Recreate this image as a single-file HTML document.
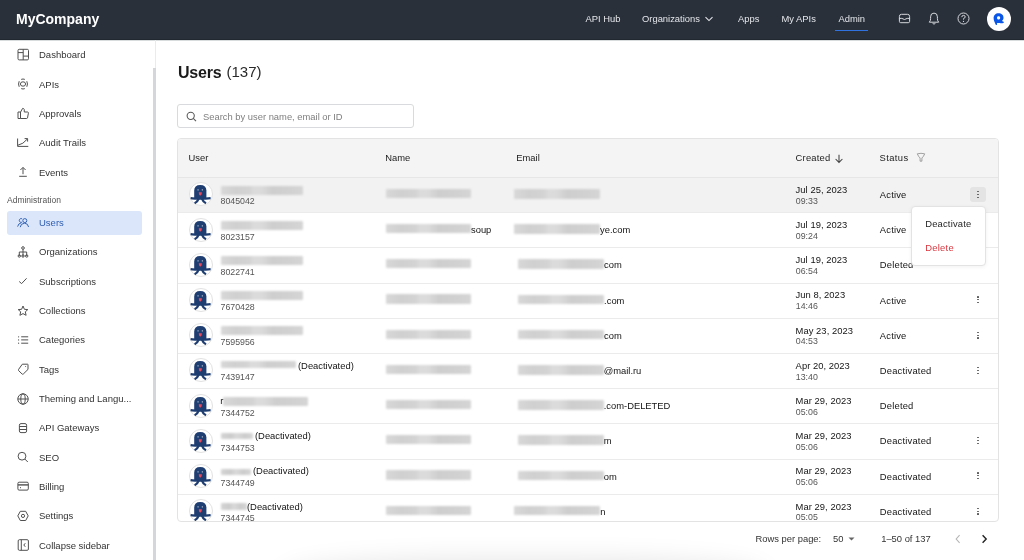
<!DOCTYPE html>
<html><head><meta charset="utf-8"><style>
html,body{margin:0;padding:0;}
body{width:1024px;height:560px;overflow:hidden;position:relative;background:#fff;font-family:"Liberation Sans",sans-serif;}
.t{position:absolute;white-space:nowrap;line-height:20px;}
.bl{position:absolute;filter:blur(1px);border-radius:1px;}
svg{overflow:visible}
</style></head><body>
<div style="position:absolute;left:0;top:0;width:1024px;height:560px;will-change:transform;background:#fff">
<div style="position:absolute;left:0px;top:0px;width:1024px;height:40px;background:#29303a"></div>
<div style="position:absolute;left:0px;top:39px;width:1024px;height:1px;background:#22282f"></div>
<div style="position:absolute;left:0px;top:40px;width:1024px;height:1px;background:#d9dcdc"></div>
<div class="t" style="left:16px;top:9px;font-size:14px;color:#ffffff;font-weight:bold;">MyCompany</div>
<div class="t" style="left:585.5px;top:9px;font-size:9.4px;color:#e4e6ea;font-weight:normal;">API Hub</div>
<div class="t" style="left:642px;top:9px;font-size:9.4px;color:#e4e6ea;font-weight:normal;">Organizations</div>
<svg style="position:absolute;left:704px;top:15px;" width="10" height="8" viewBox="0 0 10 8" fill="none"><path d="M1.5 2.2 L5 5.6 L8.5 2.2" stroke="#e4e6ea" stroke-width="1.1"/></svg>
<div class="t" style="left:738px;top:9px;font-size:9.4px;color:#e4e6ea;font-weight:normal;">Apps</div>
<div class="t" style="left:781.5px;top:9px;font-size:9.4px;color:#e4e6ea;font-weight:normal;">My APIs</div>
<div class="t" style="left:838.5px;top:9px;font-size:9.4px;color:#e4e6ea;font-weight:normal;">Admin</div>
<div style="position:absolute;left:835.3px;top:29.5px;width:33px;height:1.5px;background:#2f72e0"></div>
<svg style="position:absolute;left:897px;top:12px;" width="15" height="13" viewBox="0 0 15 13" fill="none"><path d="M2.4 7.2 V4.4 Q2.4 2.3 4.5 2.3 H10.5 Q12.6 2.3 12.6 4.4 V7.2" stroke="#d6d8dc" stroke-width="1"/><path d="M2.4 6.4 H4.8 Q7.5 8.6 10.2 6.4 H12.6 V9.4 Q12.6 10.7 11.3 10.7 H3.7 Q2.4 10.7 2.4 9.4 Z" stroke="#d6d8dc" stroke-width="1" stroke-linejoin="round"/></svg>
<svg style="position:absolute;left:927px;top:11px;" width="14" height="15" viewBox="0 0 14 15" fill="none"><path d="M2.3 11.2 Q3.6 10 3.6 7.5 V5.8 Q3.6 2.1 7 2.1 Q10.4 2.1 10.4 5.8 V7.5 Q10.4 10 11.7 11.2 Z" stroke="#d6d8dc" stroke-width="1" stroke-linejoin="round"/><path d="M5.6 12.4 Q7 13.8 8.4 12.4" stroke="#d6d8dc" stroke-width="1"/></svg>
<svg style="position:absolute;left:956px;top:11px;" width="15" height="15" viewBox="0 0 15 15" fill="none"><circle cx="7.5" cy="7.5" r="5.5" stroke="#d6d8dc" stroke-width="1"/><path d="M5.8 6.1 Q5.8 4.4 7.5 4.4 Q9.2 4.4 9.2 5.9 Q9.2 7 7.5 7.6 V8.6" stroke="#d6d8dc" stroke-width="1"/><circle cx="7.5" cy="10.4" r="0.6" fill="#d6d8dc"/></svg>
<svg style="position:absolute;left:987px;top:6.75px;" width="24" height="24" viewBox="0 0 24 24" fill="none"><circle cx="12" cy="12" r="12" fill="#fff"/><path d="M11.5 6.3 C8.6 6.3 6.6 8.4 6.6 11.1 C6.6 13.4 7.6 15.4 8.6 17.4 C9.2 18.5 10.2 18.3 10.1 17.1 L10 15.9 C11 16.1 11.9 16.1 12.8 16 C13.8 16.3 15 16.4 16.3 15.9 C17.2 15.5 16.9 14.6 16.1 14.4 L14.9 14.1 C16 13.1 16.5 11.9 16.5 10.7 C16.5 8.1 14.4 6.3 11.5 6.3 Z M11.6 9.3 C12.6 9.3 13.2 10 13.2 10.9 C13.2 11.8 12.6 12.4 11.6 12.4 C10.6 12.4 10 11.8 10 10.9 C10 10 10.6 9.3 11.6 9.3 Z" fill="#0a56e6" fill-rule="evenodd"/></svg>
<div style="position:absolute;left:155px;top:40px;width:1px;height:520px;background:#ebebef"></div>
<div style="position:absolute;left:153px;top:68px;width:3px;height:492px;background:#d5d6da"></div>
<div class="t" style="left:39px;top:45px;font-size:9.5px;color:#333333;font-weight:normal;">Dashboard</div>
<div class="t" style="left:39px;top:75px;font-size:9.5px;color:#333333;font-weight:normal;">APIs</div>
<div class="t" style="left:39px;top:104px;font-size:9.5px;color:#333333;font-weight:normal;">Approvals</div>
<div class="t" style="left:39px;top:133px;font-size:9.5px;color:#333333;font-weight:normal;">Audit Trails</div>
<div class="t" style="left:39px;top:163px;font-size:9.5px;color:#333333;font-weight:normal;">Events</div>
<div class="t" style="left:7px;top:190px;font-size:8.5px;color:#555;font-weight:normal;">Administration</div>
<div style="position:absolute;left:7px;top:211px;width:135.2px;height:23.5px;background:#dbe6fa;border-radius:3px"></div>
<div class="t" style="left:39px;top:213px;font-size:9.5px;color:#2f5eb1;font-weight:normal;">Users</div>
<div class="t" style="left:39px;top:242px;font-size:9.5px;color:#333333;font-weight:normal;">Organizations</div>
<div class="t" style="left:39px;top:272px;font-size:9.5px;color:#333333;font-weight:normal;">Subscriptions</div>
<div class="t" style="left:39px;top:301px;font-size:9.5px;color:#333333;font-weight:normal;">Collections</div>
<div class="t" style="left:39px;top:330px;font-size:9.5px;color:#333333;font-weight:normal;">Categories</div>
<div class="t" style="left:39px;top:360px;font-size:9.5px;color:#333333;font-weight:normal;">Tags</div>
<div class="t" style="left:39px;top:389px;font-size:9.5px;color:#333333;font-weight:normal;">Theming and Langu...</div>
<div class="t" style="left:39px;top:418px;font-size:9.5px;color:#333333;font-weight:normal;">API Gateways</div>
<div class="t" style="left:39px;top:448px;font-size:9.5px;color:#333333;font-weight:normal;">SEO</div>
<div class="t" style="left:39px;top:477px;font-size:9.5px;color:#333333;font-weight:normal;">Billing</div>
<div class="t" style="left:39px;top:506px;font-size:9.5px;color:#333333;font-weight:normal;">Settings</div>
<div class="t" style="left:39px;top:536px;font-size:9.5px;color:#333333;font-weight:normal;">Collapse sidebar</div>
<svg style="position:absolute;left:16px;top:48px;" width="14" height="14" viewBox="0 0 14 14" fill="none"><rect x="2" y="1.3" width="10.5" height="10.6" rx="1.2" stroke="#505050" stroke-width="1" fill="none"/><path d="M7.2 1.3 V11.9 M2 4.6 H7.2 M7.2 8.1 H12.5" stroke="#505050" stroke-width="1" fill="none"/></svg>
<svg style="position:absolute;left:16px;top:77px;" width="14" height="14" viewBox="0 0 14 14" fill="none"><ellipse cx="7" cy="7" rx="2.6" ry="2.2" stroke="#505050" stroke-width="1" fill="none"/><path d="M5.2 2.4 Q7 1.6 8.8 2.4 M5.2 11.6 Q7 12.4 8.8 11.6 M3.2 4.2 Q1.9 7 3.2 9.8 M10.8 4.2 Q12.1 7 10.8 9.8" stroke="#505050" stroke-width="1" fill="none"/></svg>
<svg style="position:absolute;left:16px;top:107px;" width="14" height="14" viewBox="0 0 14 14" fill="none"><path d="M2 5 H4.5 V11.5 H2 Z M4.5 5.2 L6.6 1.4 Q7.8 1.2 8.2 2.4 L8.3 5 H11.6 Q12.6 5.2 12.4 6.2 L11.5 10.9 Q11.3 11.5 10.6 11.5 H4.5" stroke="#505050" stroke-width="1" fill="none" stroke-linejoin="round"/></svg>
<svg style="position:absolute;left:16px;top:136px;" width="14" height="14" viewBox="0 0 14 14" fill="none"><path d="M1.6 2.5 V10.4 H12.3" stroke="#505050" stroke-width="1" fill="none"/><path d="M2 9.2 Q7 8.3 11.4 3 M8.6 2.6 H11.6 V5.6" stroke="#505050" stroke-width="1" fill="none"/></svg>
<svg style="position:absolute;left:16px;top:166px;" width="14" height="14" viewBox="0 0 14 14" fill="none"><path d="M7 1.6 V8.2 M4.4 4 L7 1.4 L9.6 4 M3.2 10.3 H10.8" stroke="#505050" stroke-width="1" fill="none"/></svg>
<svg style="position:absolute;left:16px;top:216px;" width="14" height="14" viewBox="0 0 14 14" fill="none"><path d="M6.1 2.8 A1.9 1.9 0 1 0 6.1 6.1" stroke="#3465b8" stroke-width="1" fill="none"/><circle cx="8.8" cy="4.6" r="2" stroke="#3465b8" stroke-width="1" fill="none"/><path d="M1.6 10.6 Q2.4 7.3 5.2 6.8 M4.2 11.2 Q4.6 7.4 8.6 7.2 Q12 7.4 12.6 11" stroke="#3465b8" stroke-width="1" fill="none"/></svg>
<svg style="position:absolute;left:16px;top:245px;" width="14" height="14" viewBox="0 0 14 14" fill="none"><circle cx="7" cy="3" r="1.3" stroke="#505050" stroke-width="1" fill="none"/><path d="M7 4.3 V11.5 M3.3 11 V7 H10.7 V11" stroke="#505050" stroke-width="1" fill="none"/><circle cx="3.3" cy="11" r="1.2" stroke="#505050" stroke-width="1" fill="none"/><circle cx="7" cy="11" r="1.2" stroke="#505050" stroke-width="1" fill="none"/><circle cx="10.7" cy="11" r="1.2" stroke="#505050" stroke-width="1" fill="none"/></svg>
<svg style="position:absolute;left:16px;top:274px;" width="14" height="14" viewBox="0 0 14 14" fill="none"><path d="M3.2 7.5 L5.6 9.6 L10.6 4.3" stroke="#505050" stroke-width="1" fill="none"/></svg>
<svg style="position:absolute;left:16px;top:304px;" width="14" height="14" viewBox="0 0 14 14" fill="none"><path d="M7 2 L8.4 5.3 L11.8 5.6 L9.3 7.8 L10.1 11.3 L7 9.6 L3.9 11.3 L4.7 7.8 L2.2 5.6 L5.6 5.3 Z" stroke="#505050" stroke-width="1" fill="none" stroke-linejoin="round"/></svg>
<svg style="position:absolute;left:16px;top:333px;" width="14" height="14" viewBox="0 0 14 14" fill="none"><path d="M5.2 3.8 H12.2 M5.2 6.9 H12.2 M5.2 10.2 H12.2" stroke="#505050" stroke-width="1" fill="none"/><circle cx="2.6" cy="3.8" r="0.6" fill="#505050"/><circle cx="2.6" cy="6.9" r="0.6" fill="#505050"/><circle cx="2.6" cy="10.2" r="0.6" fill="#505050"/></svg>
<svg style="position:absolute;left:16px;top:362px;" width="14" height="14" viewBox="0 0 14 14" fill="none"><path d="M6.3 2.2 H11.6 Q12 2.2 12 2.7 V7.4 L7.3 12 Q6.7 12.5 6.1 12 L2.6 8.6 Q2 8 2.6 7.4 Z" stroke="#505050" stroke-width="1" fill="none" stroke-linejoin="round"/><circle cx="9.6" cy="4.5" r="0.5" fill="#505050"/></svg>
<svg style="position:absolute;left:16px;top:392px;" width="14" height="14" viewBox="0 0 14 14" fill="none"><circle cx="7" cy="7" r="5.2" stroke="#505050" stroke-width="1" fill="none"/><path d="M1.8 7 H12.2" stroke="#505050" stroke-width="1" fill="none"/><ellipse cx="7" cy="7" rx="2.2" ry="5.2" stroke="#505050" stroke-width="1" fill="none"/></svg>
<svg style="position:absolute;left:16px;top:421px;" width="14" height="14" viewBox="0 0 14 14" fill="none"><rect x="3.4" y="2.6" width="7.2" height="9" rx="1.6" stroke="#505050" stroke-width="1" fill="none"/><path d="M3.4 5.5 H10.6 M3.4 8.5 H10.6" stroke="#505050" stroke-width="1" fill="none"/></svg>
<svg style="position:absolute;left:16px;top:450px;" width="14" height="14" viewBox="0 0 14 14" fill="none"><circle cx="6" cy="6.2" r="3.9" stroke="#505050" stroke-width="1" fill="none"/><path d="M8.8 9 L11.8 12" stroke="#505050" stroke-width="1" fill="none"/></svg>
<svg style="position:absolute;left:16px;top:479px;" width="14" height="14" viewBox="0 0 14 14" fill="none"><rect x="1.9" y="3.2" width="10.4" height="7.9" rx="1.2" stroke="#505050" stroke-width="1" fill="none"/><path d="M1.9 5.9 H12.3" stroke="#505050" stroke-width="1.4"/><path d="M4 8.7 H5" stroke="#505050" stroke-width="1" fill="none"/></svg>
<svg style="position:absolute;left:16px;top:509px;" width="14" height="14" viewBox="0 0 14 14" fill="none"><path d="M4.3 2.3 H9.7 L12.2 6.9 L9.7 11.5 H4.3 L1.8 6.9 Z" stroke="#505050" stroke-width="1" fill="none" stroke-linejoin="round"/><circle cx="7" cy="6.9" r="1.6" stroke="#505050" stroke-width="1" fill="none"/></svg>
<svg style="position:absolute;left:16px;top:538px;" width="14" height="14" viewBox="0 0 14 14" fill="none"><rect x="2.2" y="1.7" width="10.2" height="10.6" rx="1.2" stroke="#505050" stroke-width="1" fill="none"/><path d="M5.3 1.7 V12.3 M9.3 5.2 L7.8 7 L9.3 8.8" stroke="#505050" stroke-width="1" fill="none"/></svg>
<div class="t" style="left:178px;top:63px;font-size:15px;color:#1a1a1a;font-weight:bold;font-size:16px;letter-spacing:-0.2px">Users</div>
<div class="t" style="left:226.5px;top:62px;font-size:15px;color:#2a2a2a;font-weight:normal;">(137)</div>
<div style="position:absolute;left:177px;top:104px;width:236.5px;height:24px;border:1px solid #d9dadd;border-radius:3px;box-sizing:border-box;background:#fff"></div>
<svg style="position:absolute;left:185px;top:110px;" width="13" height="13" viewBox="0 0 13 13" fill="none"><circle cx="5.7" cy="5.8" r="3.6" stroke="#555" stroke-width="1.05"/><path d="M8.3 8.4 L11 11.1" stroke="#555" stroke-width="1.05"/></svg>
<div class="t" style="left:203px;top:107px;font-size:9.4px;color:#808080;font-weight:normal;">Search by user name, email or ID</div>
<div style="position:absolute;left:177px;top:137.8px;width:822px;height:383.90000000000003px;border:1px solid #e3e3e3;border-radius:4px;box-sizing:border-box;overflow:hidden;background:#fff">
<div style="position:absolute;left:-1px;top:-1px;width:830px;height:40.2px;background:#f4f4f4"></div>
<div style="position:absolute;left:-1px;top:38.19999999999999px;width:830px;height:1px;background:#e6e6e6"></div>
<div style="position:absolute;left:-1px;top:39.19999999999999px;width:830px;height:34.7px;background:#f2f2f2"></div>
<div style="position:absolute;left:-1px;top:73.39999999999998px;width:830px;height:1px;background:#ebebeb"></div>
<div style="position:absolute;left:-1px;top:108.59999999999997px;width:830px;height:1px;background:#ebebeb"></div>
<div style="position:absolute;left:-1px;top:143.8px;width:830px;height:1px;background:#ebebeb"></div>
<div style="position:absolute;left:-1px;top:179.0px;width:830px;height:1px;background:#ebebeb"></div>
<div style="position:absolute;left:-1px;top:214.2px;width:830px;height:1px;background:#ebebeb"></div>
<div style="position:absolute;left:-1px;top:249.39999999999998px;width:830px;height:1px;background:#ebebeb"></div>
<div style="position:absolute;left:-1px;top:284.6px;width:830px;height:1px;background:#ebebeb"></div>
<div style="position:absolute;left:-1px;top:319.8px;width:830px;height:1px;background:#ebebeb"></div>
<div style="position:absolute;left:-1px;top:355.0px;width:830px;height:1px;background:#ebebeb"></div>
<div style="position:absolute;left:-1px;top:390.2px;width:830px;height:1px;background:#ebebeb"></div>
</div>
<div class="t" style="left:188.5px;top:148px;font-size:9.4px;color:#1c1c1c;font-weight:normal;">User</div>
<div class="t" style="left:385.2px;top:148px;font-size:9.4px;color:#1c1c1c;font-weight:normal;">Name</div>
<div class="t" style="left:516.3px;top:148px;font-size:9.4px;color:#1c1c1c;font-weight:normal;">Email</div>
<div class="t" style="left:795.6px;top:148px;font-size:9.4px;color:#1c1c1c;font-weight:normal;letter-spacing:0.2px">Created</div>
<svg style="position:absolute;left:833px;top:153px;" width="12" height="11" viewBox="0 0 12 11" fill="none"><path d="M6 1.8 V9.4 M2.6 6 L6 9.4 L9.4 6" stroke="#444" stroke-width="1.05"/></svg>
<div class="t" style="left:879.6px;top:148px;font-size:9.4px;color:#1c1c1c;font-weight:normal;letter-spacing:0.4px">Status</div>
<svg style="position:absolute;left:915px;top:151px;" width="12" height="12" viewBox="0 0 12 12" fill="none"><path d="M2.3 2.8 Q6 1.8 9.7 2.8 Q8.6 5.6 6.9 7 V10.2 H5.1 V7 Q3.4 5.6 2.3 2.8 Z" stroke="#8c8c8c" stroke-width="0.8" stroke-linejoin="round"/></svg>
<div style="position:absolute;left:0;top:0;width:1024px;height:521px;overflow:hidden">
<svg style="position:absolute;left:189.2px;top:182.4px" width="24" height="24" viewBox="0 0 24 24"><circle cx="12" cy="12" r="11.5" fill="#fff" stroke="#dedede" stroke-width="0.9"/><path d="M5.2 16.2 V8.6 Q5.2 3 11.2 3 Q17.4 3 17.4 8.6 V16.2 Z" fill="#1e3d70"/><path d="M1.6 16.2 Q3 16.4 6 16.6 H16.5 Q19.5 16.4 21.6 16.2" stroke="#1e3d70" stroke-width="2.3" fill="none"/><path d="M9.6 16.6 Q8.6 19.8 5.6 21.2 M13 16.6 Q14 19.8 17 21.2" stroke="#1e3d70" stroke-width="2.3" fill="none"/><path d="M8.6 7.2 L10.1 8 L8.6 8.6 Z" fill="#fff"/><path d="M13.8 7.2 L12.3 8 L13.8 8.6 Z" fill="#fff"/><path d="M9.8 10.2 H12.8 Q12.7 13.4 11.3 13.4 Q9.9 13.4 9.8 10.2 Z" fill="#ea4a5c"/></svg>
<div class="bl" style="left:221px;top:185.5px;width:82px;height:9px;background:linear-gradient(90deg,#d8d8d8 0%,#d0d0d0 18%,#d3d3d3 34%,#dcdcdc 41%,#dadada 50%,#cecece 62%,#d1d1d1 84%,#d5d5d5 100%)"></div>
<div class="t" style="left:220.5px;top:191px;font-size:8.8px;color:#555555;font-weight:normal;">8045042</div>
<div class="bl" style="left:385.5px;top:188.8px;width:85.5px;height:9.3px;background:linear-gradient(90deg,#d8d8d8 0%,#d0d0d0 18%,#d3d3d3 34%,#dcdcdc 41%,#dadada 50%,#cecece 62%,#d1d1d1 84%,#d5d5d5 100%)"></div>
<div class="bl" style="left:514px;top:189.0px;width:86px;height:9.7px;background:linear-gradient(90deg,#d8d8d8 0%,#d0d0d0 18%,#d3d3d3 34%,#dcdcdc 41%,#dadada 50%,#cecece 62%,#d1d1d1 84%,#d5d5d5 100%)"></div>
<div class="t" style="left:795.6px;top:180px;font-size:9.4px;color:#141414;font-weight:normal;letter-spacing:0.05px">Jul 25, 2023</div>
<div class="t" style="left:795.8px;top:191px;font-size:8.8px;color:#555555;font-weight:normal;">09:33</div>
<div class="t" style="left:879.8px;top:185px;font-size:9.4px;color:#141414;font-weight:normal;letter-spacing:0.2px">Active</div>
<div style="position:absolute;left:970.2px;top:186.5px;width:15.7px;height:15.3px;background:#e4e4e4;border-radius:3px"></div>
<div style="position:absolute;left:977.4px;top:190.8px;width:1.2px;height:1.2px;background:#5a5a5a;border-radius:50%"></div>
<div style="position:absolute;left:977.4px;top:193.70000000000002px;width:1.2px;height:1.2px;background:#5a5a5a;border-radius:50%"></div>
<div style="position:absolute;left:977.4px;top:196.60000000000002px;width:1.2px;height:1.2px;background:#5a5a5a;border-radius:50%"></div>
<svg style="position:absolute;left:189.2px;top:217.6px" width="24" height="24" viewBox="0 0 24 24"><circle cx="12" cy="12" r="11.5" fill="#fff" stroke="#dedede" stroke-width="0.9"/><path d="M5.2 16.2 V8.6 Q5.2 3 11.2 3 Q17.4 3 17.4 8.6 V16.2 Z" fill="#1e3d70"/><path d="M1.6 16.2 Q3 16.4 6 16.6 H16.5 Q19.5 16.4 21.6 16.2" stroke="#1e3d70" stroke-width="2.3" fill="none"/><path d="M9.6 16.6 Q8.6 19.8 5.6 21.2 M13 16.6 Q14 19.8 17 21.2" stroke="#1e3d70" stroke-width="2.3" fill="none"/><path d="M8.6 7.2 L10.1 8 L8.6 8.6 Z" fill="#fff"/><path d="M13.8 7.2 L12.3 8 L13.8 8.6 Z" fill="#fff"/><path d="M9.8 10.2 H12.8 Q12.7 13.4 11.3 13.4 Q9.9 13.4 9.8 10.2 Z" fill="#ea4a5c"/></svg>
<div class="bl" style="left:221px;top:220.7px;width:82px;height:9px;background:linear-gradient(90deg,#d8d8d8 0%,#d0d0d0 18%,#d3d3d3 34%,#dcdcdc 41%,#dadada 50%,#cecece 62%,#d1d1d1 84%,#d5d5d5 100%)"></div>
<div class="t" style="left:220.5px;top:227px;font-size:8.8px;color:#555555;font-weight:normal;">8023157</div>
<div class="bl" style="left:385.5px;top:224.0px;width:85.5px;height:9.3px;background:linear-gradient(90deg,#d8d8d8 0%,#d0d0d0 18%,#d3d3d3 34%,#dcdcdc 41%,#dadada 50%,#cecece 62%,#d1d1d1 84%,#d5d5d5 100%)"></div>
<div class="t" style="left:471px;top:220px;font-size:9.4px;color:#141414;font-weight:normal;">soup</div>
<div class="bl" style="left:514px;top:224.2px;width:86px;height:9.7px;background:linear-gradient(90deg,#d8d8d8 0%,#d0d0d0 18%,#d3d3d3 34%,#dcdcdc 41%,#dadada 50%,#cecece 62%,#d1d1d1 84%,#d5d5d5 100%)"></div>
<div class="t" style="left:600px;top:220px;font-size:9.4px;color:#141414;font-weight:normal;">ye.com</div>
<div class="t" style="left:795.6px;top:215px;font-size:9.4px;color:#141414;font-weight:normal;letter-spacing:0.05px">Jul 19, 2023</div>
<div class="t" style="left:795.8px;top:226px;font-size:8.8px;color:#555555;font-weight:normal;">09:24</div>
<div class="t" style="left:879.8px;top:220px;font-size:9.4px;color:#141414;font-weight:normal;letter-spacing:0.2px">Active</div>
<svg style="position:absolute;left:189.2px;top:252.8px" width="24" height="24" viewBox="0 0 24 24"><circle cx="12" cy="12" r="11.5" fill="#fff" stroke="#dedede" stroke-width="0.9"/><path d="M5.2 16.2 V8.6 Q5.2 3 11.2 3 Q17.4 3 17.4 8.6 V16.2 Z" fill="#1e3d70"/><path d="M1.6 16.2 Q3 16.4 6 16.6 H16.5 Q19.5 16.4 21.6 16.2" stroke="#1e3d70" stroke-width="2.3" fill="none"/><path d="M9.6 16.6 Q8.6 19.8 5.6 21.2 M13 16.6 Q14 19.8 17 21.2" stroke="#1e3d70" stroke-width="2.3" fill="none"/><path d="M8.6 7.2 L10.1 8 L8.6 8.6 Z" fill="#fff"/><path d="M13.8 7.2 L12.3 8 L13.8 8.6 Z" fill="#fff"/><path d="M9.8 10.2 H12.8 Q12.7 13.4 11.3 13.4 Q9.9 13.4 9.8 10.2 Z" fill="#ea4a5c"/></svg>
<div class="bl" style="left:221px;top:255.9px;width:82px;height:9px;background:linear-gradient(90deg,#d8d8d8 0%,#d0d0d0 18%,#d3d3d3 34%,#dcdcdc 41%,#dadada 50%,#cecece 62%,#d1d1d1 84%,#d5d5d5 100%)"></div>
<div class="t" style="left:220.5px;top:262px;font-size:8.8px;color:#555555;font-weight:normal;">8022741</div>
<div class="bl" style="left:385.5px;top:259.2px;width:85.5px;height:9.3px;background:linear-gradient(90deg,#d8d8d8 0%,#d0d0d0 18%,#d3d3d3 34%,#dcdcdc 41%,#dadada 50%,#cecece 62%,#d1d1d1 84%,#d5d5d5 100%)"></div>
<div class="bl" style="left:517.7px;top:259.4px;width:86.4px;height:9.7px;background:linear-gradient(90deg,#d8d8d8 0%,#d0d0d0 18%,#d3d3d3 34%,#dcdcdc 41%,#dadada 50%,#cecece 62%,#d1d1d1 84%,#d5d5d5 100%)"></div>
<div class="t" style="left:604.1px;top:255px;font-size:9.4px;color:#141414;font-weight:normal;">com</div>
<div class="t" style="left:795.6px;top:250px;font-size:9.4px;color:#141414;font-weight:normal;letter-spacing:0.05px">Jul 19, 2023</div>
<div class="t" style="left:795.8px;top:261px;font-size:8.8px;color:#555555;font-weight:normal;">06:54</div>
<div class="t" style="left:879.8px;top:255px;font-size:9.4px;color:#141414;font-weight:normal;letter-spacing:0.2px">Deleted</div>
<svg style="position:absolute;left:189.2px;top:288.0px" width="24" height="24" viewBox="0 0 24 24"><circle cx="12" cy="12" r="11.5" fill="#fff" stroke="#dedede" stroke-width="0.9"/><path d="M5.2 16.2 V8.6 Q5.2 3 11.2 3 Q17.4 3 17.4 8.6 V16.2 Z" fill="#1e3d70"/><path d="M1.6 16.2 Q3 16.4 6 16.6 H16.5 Q19.5 16.4 21.6 16.2" stroke="#1e3d70" stroke-width="2.3" fill="none"/><path d="M9.6 16.6 Q8.6 19.8 5.6 21.2 M13 16.6 Q14 19.8 17 21.2" stroke="#1e3d70" stroke-width="2.3" fill="none"/><path d="M8.6 7.2 L10.1 8 L8.6 8.6 Z" fill="#fff"/><path d="M13.8 7.2 L12.3 8 L13.8 8.6 Z" fill="#fff"/><path d="M9.8 10.2 H12.8 Q12.7 13.4 11.3 13.4 Q9.9 13.4 9.8 10.2 Z" fill="#ea4a5c"/></svg>
<div class="bl" style="left:221px;top:291.1px;width:82px;height:9px;background:linear-gradient(90deg,#d8d8d8 0%,#d0d0d0 18%,#d3d3d3 34%,#dcdcdc 41%,#dadada 50%,#cecece 62%,#d1d1d1 84%,#d5d5d5 100%)"></div>
<div class="t" style="left:220.5px;top:297px;font-size:8.8px;color:#555555;font-weight:normal;">7670428</div>
<div class="bl" style="left:385.5px;top:294.40000000000003px;width:85.5px;height:9.3px;background:linear-gradient(90deg,#d8d8d8 0%,#d0d0d0 18%,#d3d3d3 34%,#dcdcdc 41%,#dadada 50%,#cecece 62%,#d1d1d1 84%,#d5d5d5 100%)"></div>
<div class="bl" style="left:517.7px;top:294.6px;width:86.4px;height:9.7px;background:linear-gradient(90deg,#d8d8d8 0%,#d0d0d0 18%,#d3d3d3 34%,#dcdcdc 41%,#dadada 50%,#cecece 62%,#d1d1d1 84%,#d5d5d5 100%)"></div>
<div class="t" style="left:604.1px;top:291px;font-size:9.4px;color:#141414;font-weight:normal;">.com</div>
<div class="t" style="left:795.6px;top:285px;font-size:9.4px;color:#141414;font-weight:normal;letter-spacing:0.05px">Jun 8, 2023</div>
<div class="t" style="left:795.8px;top:296px;font-size:8.8px;color:#555555;font-weight:normal;">14:46</div>
<div class="t" style="left:879.8px;top:291px;font-size:9.4px;color:#141414;font-weight:normal;letter-spacing:0.2px">Active</div>
<div style="position:absolute;left:977.4px;top:296.40000000000003px;width:1.2px;height:1.2px;background:#5a5a5a;border-radius:50%"></div>
<div style="position:absolute;left:977.4px;top:299.3px;width:1.2px;height:1.2px;background:#5a5a5a;border-radius:50%"></div>
<div style="position:absolute;left:977.4px;top:302.2px;width:1.2px;height:1.2px;background:#5a5a5a;border-radius:50%"></div>
<svg style="position:absolute;left:189.2px;top:323.2px" width="24" height="24" viewBox="0 0 24 24"><circle cx="12" cy="12" r="11.5" fill="#fff" stroke="#dedede" stroke-width="0.9"/><path d="M5.2 16.2 V8.6 Q5.2 3 11.2 3 Q17.4 3 17.4 8.6 V16.2 Z" fill="#1e3d70"/><path d="M1.6 16.2 Q3 16.4 6 16.6 H16.5 Q19.5 16.4 21.6 16.2" stroke="#1e3d70" stroke-width="2.3" fill="none"/><path d="M9.6 16.6 Q8.6 19.8 5.6 21.2 M13 16.6 Q14 19.8 17 21.2" stroke="#1e3d70" stroke-width="2.3" fill="none"/><path d="M8.6 7.2 L10.1 8 L8.6 8.6 Z" fill="#fff"/><path d="M13.8 7.2 L12.3 8 L13.8 8.6 Z" fill="#fff"/><path d="M9.8 10.2 H12.8 Q12.7 13.4 11.3 13.4 Q9.9 13.4 9.8 10.2 Z" fill="#ea4a5c"/></svg>
<div class="bl" style="left:221px;top:326.3px;width:82px;height:9px;background:linear-gradient(90deg,#d8d8d8 0%,#d0d0d0 18%,#d3d3d3 34%,#dcdcdc 41%,#dadada 50%,#cecece 62%,#d1d1d1 84%,#d5d5d5 100%)"></div>
<div class="t" style="left:220.5px;top:332px;font-size:8.8px;color:#555555;font-weight:normal;">7595956</div>
<div class="bl" style="left:385.5px;top:329.6px;width:85.5px;height:9.3px;background:linear-gradient(90deg,#d8d8d8 0%,#d0d0d0 18%,#d3d3d3 34%,#dcdcdc 41%,#dadada 50%,#cecece 62%,#d1d1d1 84%,#d5d5d5 100%)"></div>
<div class="bl" style="left:517.7px;top:329.8px;width:86.4px;height:9.7px;background:linear-gradient(90deg,#d8d8d8 0%,#d0d0d0 18%,#d3d3d3 34%,#dcdcdc 41%,#dadada 50%,#cecece 62%,#d1d1d1 84%,#d5d5d5 100%)"></div>
<div class="t" style="left:604.1px;top:326px;font-size:9.4px;color:#141414;font-weight:normal;">com</div>
<div class="t" style="left:795.6px;top:321px;font-size:9.4px;color:#141414;font-weight:normal;letter-spacing:0.05px">May 23, 2023</div>
<div class="t" style="left:795.8px;top:331px;font-size:8.8px;color:#555555;font-weight:normal;">04:53</div>
<div class="t" style="left:879.8px;top:326px;font-size:9.4px;color:#141414;font-weight:normal;letter-spacing:0.2px">Active</div>
<div style="position:absolute;left:977.4px;top:331.6px;width:1.2px;height:1.2px;background:#5a5a5a;border-radius:50%"></div>
<div style="position:absolute;left:977.4px;top:334.5px;width:1.2px;height:1.2px;background:#5a5a5a;border-radius:50%"></div>
<div style="position:absolute;left:977.4px;top:337.4px;width:1.2px;height:1.2px;background:#5a5a5a;border-radius:50%"></div>
<svg style="position:absolute;left:189.2px;top:358.4px" width="24" height="24" viewBox="0 0 24 24"><circle cx="12" cy="12" r="11.5" fill="#fff" stroke="#dedede" stroke-width="0.9"/><path d="M5.2 16.2 V8.6 Q5.2 3 11.2 3 Q17.4 3 17.4 8.6 V16.2 Z" fill="#1e3d70"/><path d="M1.6 16.2 Q3 16.4 6 16.6 H16.5 Q19.5 16.4 21.6 16.2" stroke="#1e3d70" stroke-width="2.3" fill="none"/><path d="M9.6 16.6 Q8.6 19.8 5.6 21.2 M13 16.6 Q14 19.8 17 21.2" stroke="#1e3d70" stroke-width="2.3" fill="none"/><path d="M8.6 7.2 L10.1 8 L8.6 8.6 Z" fill="#fff"/><path d="M13.8 7.2 L12.3 8 L13.8 8.6 Z" fill="#fff"/><path d="M9.8 10.2 H12.8 Q12.7 13.4 11.3 13.4 Q9.9 13.4 9.8 10.2 Z" fill="#ea4a5c"/></svg>
<div class="bl" style="left:221px;top:360.5px;width:75px;height:7.5px;background:linear-gradient(90deg,#d8d8d8 0%,#d0d0d0 18%,#d3d3d3 34%,#dcdcdc 41%,#dadada 50%,#cecece 62%,#d1d1d1 84%,#d5d5d5 100%)"></div>
<div class="t" style="left:298px;top:356px;font-size:9.4px;color:#141414;font-weight:normal;">(Deactivated)</div>
<div class="t" style="left:220.5px;top:367px;font-size:8.8px;color:#555555;font-weight:normal;">7439147</div>
<div class="bl" style="left:385.5px;top:364.8px;width:85.5px;height:9.3px;background:linear-gradient(90deg,#d8d8d8 0%,#d0d0d0 18%,#d3d3d3 34%,#dcdcdc 41%,#dadada 50%,#cecece 62%,#d1d1d1 84%,#d5d5d5 100%)"></div>
<div class="bl" style="left:517.7px;top:365.0px;width:86px;height:9.7px;background:linear-gradient(90deg,#d8d8d8 0%,#d0d0d0 18%,#d3d3d3 34%,#dcdcdc 41%,#dadada 50%,#cecece 62%,#d1d1d1 84%,#d5d5d5 100%)"></div>
<div class="t" style="left:603.7px;top:361px;font-size:9.4px;color:#141414;font-weight:normal;">@mail.ru</div>
<div class="t" style="left:795.6px;top:356px;font-size:9.4px;color:#141414;font-weight:normal;letter-spacing:0.05px">Apr 20, 2023</div>
<div class="t" style="left:795.8px;top:367px;font-size:8.8px;color:#555555;font-weight:normal;">13:40</div>
<div class="t" style="left:879.8px;top:361px;font-size:9.4px;color:#141414;font-weight:normal;letter-spacing:0.2px">Deactivated</div>
<div style="position:absolute;left:977.4px;top:366.8px;width:1.2px;height:1.2px;background:#5a5a5a;border-radius:50%"></div>
<div style="position:absolute;left:977.4px;top:369.7px;width:1.2px;height:1.2px;background:#5a5a5a;border-radius:50%"></div>
<div style="position:absolute;left:977.4px;top:372.59999999999997px;width:1.2px;height:1.2px;background:#5a5a5a;border-radius:50%"></div>
<svg style="position:absolute;left:189.2px;top:393.6px" width="24" height="24" viewBox="0 0 24 24"><circle cx="12" cy="12" r="11.5" fill="#fff" stroke="#dedede" stroke-width="0.9"/><path d="M5.2 16.2 V8.6 Q5.2 3 11.2 3 Q17.4 3 17.4 8.6 V16.2 Z" fill="#1e3d70"/><path d="M1.6 16.2 Q3 16.4 6 16.6 H16.5 Q19.5 16.4 21.6 16.2" stroke="#1e3d70" stroke-width="2.3" fill="none"/><path d="M9.6 16.6 Q8.6 19.8 5.6 21.2 M13 16.6 Q14 19.8 17 21.2" stroke="#1e3d70" stroke-width="2.3" fill="none"/><path d="M8.6 7.2 L10.1 8 L8.6 8.6 Z" fill="#fff"/><path d="M13.8 7.2 L12.3 8 L13.8 8.6 Z" fill="#fff"/><path d="M9.8 10.2 H12.8 Q12.7 13.4 11.3 13.4 Q9.9 13.4 9.8 10.2 Z" fill="#ea4a5c"/></svg>
<div class="bl" style="left:223px;top:396.70000000000005px;width:85px;height:9px;background:linear-gradient(90deg,#d8d8d8 0%,#d0d0d0 18%,#d3d3d3 34%,#dcdcdc 41%,#dadada 50%,#cecece 62%,#d1d1d1 84%,#d5d5d5 100%)"></div>
<div class="t" style="left:220.3px;top:391px;font-size:9.4px;color:#141414;font-weight:normal;">r</div>
<div class="t" style="left:220.5px;top:403px;font-size:8.8px;color:#555555;font-weight:normal;">7344752</div>
<div class="bl" style="left:385.5px;top:400.00000000000006px;width:85.5px;height:9.3px;background:linear-gradient(90deg,#d8d8d8 0%,#d0d0d0 18%,#d3d3d3 34%,#dcdcdc 41%,#dadada 50%,#cecece 62%,#d1d1d1 84%,#d5d5d5 100%)"></div>
<div class="bl" style="left:517.7px;top:400.20000000000005px;width:86px;height:9.7px;background:linear-gradient(90deg,#d8d8d8 0%,#d0d0d0 18%,#d3d3d3 34%,#dcdcdc 41%,#dadada 50%,#cecece 62%,#d1d1d1 84%,#d5d5d5 100%)"></div>
<div class="t" style="left:603.7px;top:396px;font-size:9.4px;color:#141414;font-weight:normal;">.com-DELETED</div>
<div class="t" style="left:795.6px;top:391px;font-size:9.4px;color:#141414;font-weight:normal;letter-spacing:0.05px">Mar 29, 2023</div>
<div class="t" style="left:795.8px;top:402px;font-size:8.8px;color:#555555;font-weight:normal;">05:06</div>
<div class="t" style="left:879.8px;top:396px;font-size:9.4px;color:#141414;font-weight:normal;letter-spacing:0.2px">Deleted</div>
<svg style="position:absolute;left:189.2px;top:428.8px" width="24" height="24" viewBox="0 0 24 24"><circle cx="12" cy="12" r="11.5" fill="#fff" stroke="#dedede" stroke-width="0.9"/><path d="M5.2 16.2 V8.6 Q5.2 3 11.2 3 Q17.4 3 17.4 8.6 V16.2 Z" fill="#1e3d70"/><path d="M1.6 16.2 Q3 16.4 6 16.6 H16.5 Q19.5 16.4 21.6 16.2" stroke="#1e3d70" stroke-width="2.3" fill="none"/><path d="M9.6 16.6 Q8.6 19.8 5.6 21.2 M13 16.6 Q14 19.8 17 21.2" stroke="#1e3d70" stroke-width="2.3" fill="none"/><path d="M8.6 7.2 L10.1 8 L8.6 8.6 Z" fill="#fff"/><path d="M13.8 7.2 L12.3 8 L13.8 8.6 Z" fill="#fff"/><path d="M9.8 10.2 H12.8 Q12.7 13.4 11.3 13.4 Q9.9 13.4 9.8 10.2 Z" fill="#ea4a5c"/></svg>
<div class="bl" style="left:221px;top:432.90000000000003px;width:32px;height:6.3px;background:linear-gradient(90deg,#d4d4d4,#cbcbcb 30%,#d9d9d9 50%,#cccccc 75%,#d6d6d6)"></div>
<div class="t" style="left:255px;top:426px;font-size:9.4px;color:#141414;font-weight:normal;">(Deactivated)</div>
<div class="t" style="left:220.5px;top:438px;font-size:8.8px;color:#555555;font-weight:normal;">7344753</div>
<div class="bl" style="left:385.5px;top:435.20000000000005px;width:85.5px;height:9.3px;background:linear-gradient(90deg,#d8d8d8 0%,#d0d0d0 18%,#d3d3d3 34%,#dcdcdc 41%,#dadada 50%,#cecece 62%,#d1d1d1 84%,#d5d5d5 100%)"></div>
<div class="bl" style="left:517.7px;top:435.40000000000003px;width:86px;height:9.7px;background:linear-gradient(90deg,#d8d8d8 0%,#d0d0d0 18%,#d3d3d3 34%,#dcdcdc 41%,#dadada 50%,#cecece 62%,#d1d1d1 84%,#d5d5d5 100%)"></div>
<div class="t" style="left:603.7px;top:431px;font-size:9.4px;color:#141414;font-weight:normal;">m</div>
<div class="t" style="left:795.6px;top:426px;font-size:9.4px;color:#141414;font-weight:normal;letter-spacing:0.05px">Mar 29, 2023</div>
<div class="t" style="left:795.8px;top:437px;font-size:8.8px;color:#555555;font-weight:normal;">05:06</div>
<div class="t" style="left:879.8px;top:431px;font-size:9.4px;color:#141414;font-weight:normal;letter-spacing:0.2px">Deactivated</div>
<div style="position:absolute;left:977.4px;top:437.20000000000005px;width:1.2px;height:1.2px;background:#5a5a5a;border-radius:50%"></div>
<div style="position:absolute;left:977.4px;top:440.1px;width:1.2px;height:1.2px;background:#5a5a5a;border-radius:50%"></div>
<div style="position:absolute;left:977.4px;top:443.0px;width:1.2px;height:1.2px;background:#5a5a5a;border-radius:50%"></div>
<svg style="position:absolute;left:189.2px;top:464.0px" width="24" height="24" viewBox="0 0 24 24"><circle cx="12" cy="12" r="11.5" fill="#fff" stroke="#dedede" stroke-width="0.9"/><path d="M5.2 16.2 V8.6 Q5.2 3 11.2 3 Q17.4 3 17.4 8.6 V16.2 Z" fill="#1e3d70"/><path d="M1.6 16.2 Q3 16.4 6 16.6 H16.5 Q19.5 16.4 21.6 16.2" stroke="#1e3d70" stroke-width="2.3" fill="none"/><path d="M9.6 16.6 Q8.6 19.8 5.6 21.2 M13 16.6 Q14 19.8 17 21.2" stroke="#1e3d70" stroke-width="2.3" fill="none"/><path d="M8.6 7.2 L10.1 8 L8.6 8.6 Z" fill="#fff"/><path d="M13.8 7.2 L12.3 8 L13.8 8.6 Z" fill="#fff"/><path d="M9.8 10.2 H12.8 Q12.7 13.4 11.3 13.4 Q9.9 13.4 9.8 10.2 Z" fill="#ea4a5c"/></svg>
<div class="bl" style="left:221px;top:468.6px;width:30px;height:6.3px;background:linear-gradient(90deg,#d4d4d4,#cbcbcb 30%,#d9d9d9 50%,#cccccc 75%,#d6d6d6)"></div>
<div class="t" style="left:253px;top:461px;font-size:9.4px;color:#141414;font-weight:normal;">(Deactivated)</div>
<div class="t" style="left:220.5px;top:473px;font-size:8.8px;color:#555555;font-weight:normal;">7344749</div>
<div class="bl" style="left:385.5px;top:470.40000000000003px;width:85.5px;height:9.3px;background:linear-gradient(90deg,#d8d8d8 0%,#d0d0d0 18%,#d3d3d3 34%,#dcdcdc 41%,#dadada 50%,#cecece 62%,#d1d1d1 84%,#d5d5d5 100%)"></div>
<div class="bl" style="left:517.7px;top:470.6px;width:86px;height:9.7px;background:linear-gradient(90deg,#d8d8d8 0%,#d0d0d0 18%,#d3d3d3 34%,#dcdcdc 41%,#dadada 50%,#cecece 62%,#d1d1d1 84%,#d5d5d5 100%)"></div>
<div class="t" style="left:603.7px;top:467px;font-size:9.4px;color:#141414;font-weight:normal;">om</div>
<div class="t" style="left:795.6px;top:461px;font-size:9.4px;color:#141414;font-weight:normal;letter-spacing:0.05px">Mar 29, 2023</div>
<div class="t" style="left:795.8px;top:472px;font-size:8.8px;color:#555555;font-weight:normal;">05:06</div>
<div class="t" style="left:879.8px;top:467px;font-size:9.4px;color:#141414;font-weight:normal;letter-spacing:0.2px">Deactivated</div>
<div style="position:absolute;left:977.4px;top:472.40000000000003px;width:1.2px;height:1.2px;background:#5a5a5a;border-radius:50%"></div>
<div style="position:absolute;left:977.4px;top:475.3px;width:1.2px;height:1.2px;background:#5a5a5a;border-radius:50%"></div>
<div style="position:absolute;left:977.4px;top:478.2px;width:1.2px;height:1.2px;background:#5a5a5a;border-radius:50%"></div>
<svg style="position:absolute;left:189.2px;top:499.2px" width="24" height="24" viewBox="0 0 24 24"><circle cx="12" cy="12" r="11.5" fill="#fff" stroke="#dedede" stroke-width="0.9"/><path d="M5.2 16.2 V8.6 Q5.2 3 11.2 3 Q17.4 3 17.4 8.6 V16.2 Z" fill="#1e3d70"/><path d="M1.6 16.2 Q3 16.4 6 16.6 H16.5 Q19.5 16.4 21.6 16.2" stroke="#1e3d70" stroke-width="2.3" fill="none"/><path d="M9.6 16.6 Q8.6 19.8 5.6 21.2 M13 16.6 Q14 19.8 17 21.2" stroke="#1e3d70" stroke-width="2.3" fill="none"/><path d="M8.6 7.2 L10.1 8 L8.6 8.6 Z" fill="#fff"/><path d="M13.8 7.2 L12.3 8 L13.8 8.6 Z" fill="#fff"/><path d="M9.8 10.2 H12.8 Q12.7 13.4 11.3 13.4 Q9.9 13.4 9.8 10.2 Z" fill="#ea4a5c"/></svg>
<div class="bl" style="left:221px;top:503.3px;width:26px;height:6.3px;background:linear-gradient(90deg,#d4d4d4,#cbcbcb 30%,#d9d9d9 50%,#cccccc 75%,#d6d6d6)"></div>
<div class="t" style="left:247px;top:497px;font-size:9.4px;color:#141414;font-weight:normal;">(Deactivated)</div>
<div class="t" style="left:220.5px;top:508px;font-size:8.8px;color:#555555;font-weight:normal;">7344745</div>
<div class="bl" style="left:385.5px;top:505.6px;width:85.5px;height:9.3px;background:linear-gradient(90deg,#d8d8d8 0%,#d0d0d0 18%,#d3d3d3 34%,#dcdcdc 41%,#dadada 50%,#cecece 62%,#d1d1d1 84%,#d5d5d5 100%)"></div>
<div class="bl" style="left:514.3px;top:505.8px;width:86px;height:9.7px;background:linear-gradient(90deg,#d8d8d8 0%,#d0d0d0 18%,#d3d3d3 34%,#dcdcdc 41%,#dadada 50%,#cecece 62%,#d1d1d1 84%,#d5d5d5 100%)"></div>
<div class="t" style="left:600.3px;top:502px;font-size:9.4px;color:#141414;font-weight:normal;">n</div>
<div class="t" style="left:795.6px;top:497px;font-size:9.4px;color:#141414;font-weight:normal;letter-spacing:0.05px">Mar 29, 2023</div>
<div class="t" style="left:795.8px;top:507px;font-size:8.8px;color:#555555;font-weight:normal;">05:05</div>
<div class="t" style="left:879.8px;top:502px;font-size:9.4px;color:#141414;font-weight:normal;letter-spacing:0.2px">Deactivated</div>
<div style="position:absolute;left:977.4px;top:507.6px;width:1.2px;height:1.2px;background:#5a5a5a;border-radius:50%"></div>
<div style="position:absolute;left:977.4px;top:510.5px;width:1.2px;height:1.2px;background:#5a5a5a;border-radius:50%"></div>
<div style="position:absolute;left:977.4px;top:513.4px;width:1.2px;height:1.2px;background:#5a5a5a;border-radius:50%"></div>
</div>
<div style="position:absolute;left:911px;top:206px;width:75px;height:60px;background:#fff;border:1px solid #e3e3e3;border-radius:4px;box-sizing:border-box;box-shadow:0 1px 4px rgba(0,0,0,0.06)"></div>
<div class="t" style="left:925.3px;top:214px;font-size:9.4px;color:#262626;font-weight:normal;letter-spacing:0.17px">Deactivate</div>
<div class="t" style="left:925.3px;top:238px;font-size:9.4px;color:#d9363e;font-weight:normal;letter-spacing:0.25px">Delete</div>
<div class="t" style="left:755.5px;top:529px;font-size:9.4px;color:#333;font-weight:normal;">Rows per page:</div>
<div class="t" style="left:833px;top:529px;font-size:9.4px;color:#333;font-weight:normal;">50</div>
<svg style="position:absolute;left:847px;top:536px;" width="9" height="6" viewBox="0 0 9 6" fill="none"><path d="M1.5 1.5 H7.5 L4.5 4.6 Z" fill="#666"/></svg>
<div class="t" style="left:881.2px;top:529px;font-size:9.4px;color:#333;font-weight:normal;">1–50 of 137</div>
<svg style="position:absolute;left:953px;top:533px;" width="9" height="12" viewBox="0 0 9 12" fill="none"><path d="M6.6 2.2 L3.2 6 L6.6 9.8" stroke="#b5b5b5" stroke-width="1.1"/></svg>
<svg style="position:absolute;left:980px;top:533px;" width="9" height="12" viewBox="0 0 9 12" fill="none"><path d="M2.6 2.2 L6.2 6 L2.6 9.8" stroke="#222" stroke-width="1.4"/></svg>
<div style="position:absolute;left:290px;top:565px;width:470px;height:30px;background:#fff;border-radius:40%;box-shadow:0 0 26px 6px rgba(0,0,0,0.1)"></div>
</div></body></html>
